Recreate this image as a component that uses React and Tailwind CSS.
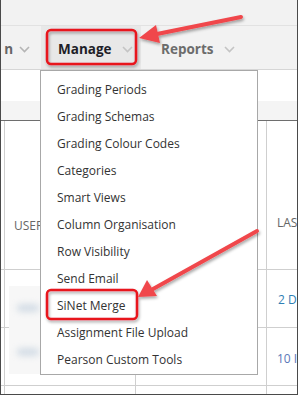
import React from 'react';

const menuItems = [
    'Grading Periods',
    'Grading Schemas',
    'Grading Colour Codes',
    'Categories',
    'Smart Views',
    'Column Organisation',
    'Row Visibility',
    'Send Email',
    'SiNet Merge',
    'Assignment File Upload',
    'Pearson Custom Tools',
];

const Chevron = ({ className }) => (
    <svg width="11" height="7" viewBox="0 0 11 7" className={className}>
        <path d="M1 1l4.5 4.5L10 1" fill="none" stroke="currentColor" strokeWidth="1.6" />
    </svg>
);

const App = () => {
    return (
        <div className="relative w-[298px] h-[395px] overflow-hidden bg-white border-x border-b border-[#4a4a4a] font-['Open_Sans',sans-serif]">
            {/* top strip */}
            <div className="h-[26px] bg-[#f2f2f2] border-b border-[#e2e2e2]"></div>

            {/* nav */}
            <div className="h-[44px] bg-[#f2f2f2] border-b border-[#d6d6d6] flex items-stretch text-[13.5px] font-bold">
                <div className="w-[40px] flex items-center justify-end gap-[6px] pr-[11px] pt-[4px] text-[#666]">
                    <span>n</span>
                    <Chevron className="text-[#b5b5b5]" />
                </div>
                <div className="w-[100px] bg-[#e8e8e8] flex items-center gap-[10px] pl-[17px] pt-[4px] text-[#1e1e28]">
                    <span>Manage</span>
                    <Chevron className="text-[#c4c4c4]" />
                </div>
                <div className="flex items-center gap-[10px] pl-[20px] pt-[4px] text-[#6c6c6c]">
                    <span>Reports</span>
                    <Chevron className="text-[#c4c4c4]" />
                </div>
            </div>

            <div className="h-[31px] bg-white"></div>
            <div className="h-[20px] bg-[#f4f4f4] border-b border-[#6e6e6e]"></div>

            {/* table */}
            <div className="grid grid-cols-[4px_131px_131px_1fr] grid-rows-[149px_58px_58px_1fr] h-[273px] text-[12px]">
                <div className="border-r border-b border-[#cfcfcf]"></div>
                <div className="border-r border-b border-[#cfcfcf] flex items-center pl-[9px] pt-[62px] text-[#666]">USER</div>
                <div className="border-r border-b border-[#cfcfcf]"></div>
                <div className="border-b border-[#cfcfcf] flex items-center pl-[10px] pt-[56px] text-[#666]">LAS</div>

                <div className="border-r border-b border-[#cfcfcf]"></div>
                <div className="border-r border-b border-[#cfcfcf]"></div>
                <div className="border-r border-b border-[#cfcfcf]"></div>
                <div className="border-b border-[#cfcfcf] flex items-center pl-[11px] pt-[2px] text-[#2f7fb5]">2 D</div>

                <div className="border-r border-b border-[#cfcfcf]"></div>
                <div className="border-r border-b border-[#cfcfcf]"></div>
                <div className="border-r border-b border-[#cfcfcf]"></div>
                <div className="border-b border-[#cfcfcf] flex items-center pl-[10px] pt-[4px] text-[#5a78b8]">10 I</div>

                <div className="border-r border-[#cfcfcf]"></div>
                <div className="border-r border-[#cfcfcf]"></div>
                <div className="border-r border-[#cfcfcf]"></div>
                <div></div>
            </div>

            {/* blurred names */}
            <div className="absolute left-[8px] top-[286px] w-[38px] h-[88px] bg-[#f7f7f7] flex flex-col items-center justify-around">
                <div className="w-[22px] h-[8px] rounded-full bg-[#d4dde6] blur-[3px]"></div>
                <div className="w-[22px] h-[8px] rounded-full bg-[#d4dde6] blur-[3px]"></div>
            </div>

            {/* dropdown menu */}
            <div className="absolute left-[39px] top-[70px] w-[218px] h-[305px] bg-white border border-[#a8a8a8] pt-[5px] text-[12px] text-[#333]">
                {menuItems.map((item) => (
                    <div key={item} className="h-[27px] flex items-center pl-[16px] pt-[1px] whitespace-nowrap">
                        {item}
                    </div>
                ))}
            </div>

            {/* annotations */}
            <svg className="absolute inset-0 pointer-events-none" width="298" height="395" viewBox="0 0 298 395">
                <defs>
                    <filter id="sh" x="-20%" y="-20%" width="140%" height="140%">
                        <feDropShadow dx="1" dy="2" stdDeviation="1.5" floodColor="#000" floodOpacity="0.35" />
                    </filter>
                </defs>
                <g filter="url(#sh)">
                    <rect x="46" y="30" width="89" height="34" rx="4" fill="none" stroke="#e8141b" strokeWidth="2.5" />
                    <rect x="46" y="290" width="90" height="29" rx="4" fill="none" stroke="#e8141b" strokeWidth="2.5" />
                    <line x1="240" y1="17" x2="156" y2="34" stroke="#f0474b" strokeWidth="4" strokeLinecap="round" />
                    <polygon points="138,38 155,25 159,43" fill="#f0474b" />
                    <line x1="256" y1="231" x2="152" y2="289" stroke="#f0474b" strokeWidth="4" strokeLinecap="round" />
                    <polygon points="137,297 146,280 156,296" fill="#f0474b" />
                </g>
            </svg>
        </div>
    );
};

export default App;
